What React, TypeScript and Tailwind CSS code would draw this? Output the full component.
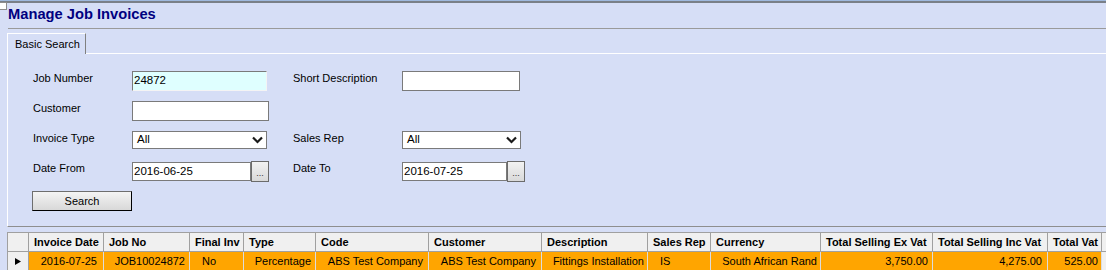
import { ReactNode } from "react";

type Col = {
    w: string;
    head: string;
    value: string;
    cell: string;
};

const cols: Col[] = [
    { w: "w-[75px]", head: "Invoice Date", value: "2016-07-25", cell: "justify-end pr-[6px]" },
    { w: "w-[86px]", head: "Job No", value: "JOB10024872", cell: "justify-end pr-[4px]" },
    { w: "w-[54px]", head: "Final Inv", value: "No", cell: "justify-start pl-[12px]" },
    { w: "w-[72px]", head: "Type", value: "Percentage", cell: "justify-end pr-[4px]" },
    { w: "w-[113px]", head: "Code", value: "ABS Test Company", cell: "justify-end pr-[5px]" },
    { w: "w-[113px]", head: "Customer", value: "ABS Test Company", cell: "justify-end pr-[5px]" },
    { w: "w-[106px]", head: "Description", value: "Fittings Installation", cell: "justify-end pr-[3px]" },
    { w: "w-[63px]", head: "Sales Rep", value: "IS", cell: "justify-start pl-[12px]" },
    { w: "w-[110px]", head: "Currency", value: "South African Rand", cell: "justify-end pr-[3px]" },
    { w: "w-[112px]", head: "Total Selling Ex Vat", value: "3,750.00", cell: "justify-end pr-[4px]" },
    { w: "w-[115px]", head: "Total Selling Inc Vat", value: "4,275.00", cell: "justify-end pr-[5px]" },
    { w: "w-[54px]", head: "Total Vat", value: "525.00", cell: "justify-end pr-[3px]" },
];

function Label({ w, children }: { w: string; children: ReactNode }) {
    return <div className={`${w} shrink-0 text-[11px] leading-[14px] text-black`}>{children}</div>;
}

function TextBox({ w, value = "", focused = false }: { w: string; value?: string; focused?: boolean }) {
    return (
        <div
            className={
                focused
                    ? `${w} h-[20px] shrink-0 border border-[#7a7a7a] border-r-[#f4f4f4] border-b-[#f4f4f4] bg-[#dfffff] pl-[1px] flex items-center text-[11.5px] text-black`
                    : `${w} h-[20px] shrink-0 border border-[#7a7a7a] bg-white pl-[1px] flex items-center text-[11.5px] text-black`
            }
        >
            {value}
        </div>
    );
}

function Select({ w, value }: { w: string; value: string }) {
    return (
        <div className={`${w} h-[18px] shrink-0 border border-[#7a7a7a] bg-white flex items-center justify-between pl-[4px] pr-[3px] text-[11.5px] text-black`}>
            <span>{value}</span>
            <svg width="11" height="8" viewBox="0 0 11 8">
                <polyline points="1,1.5 5.5,6 10,1.5" fill="none" stroke="#1a1a1a" strokeWidth="2.2" />
            </svg>
        </div>
    );
}

function DateBox({ w, value }: { w: string; value: string }) {
    return (
        <div className="flex items-start shrink-0">
            <div className={`${w} h-[19px] mt-[1px] border border-[#7a7a7a] bg-white pl-[1px] flex items-center text-[11.5px] text-black`}>
                {value}
            </div>
            <div className="w-[18px] h-[21px] border border-[#6b6b6b] bg-gradient-to-b from-[#f2f2f2] to-[#d9d9d9] flex items-end justify-center pb-[4px] text-[9px] leading-[8px] text-[#333]">
                ...
            </div>
        </div>
    );
}

export default function App() {
    return (
        <div className="relative w-[1106px] h-[270px] overflow-hidden bg-[#d6def6] font-['Liberation_Sans',Arial,sans-serif]">
            {/* window top edge */}
            <div className="h-[1px] bg-[#9fb9de]" />
            <div className="h-[2px] bg-[#7a8088]" />
            <div className="absolute left-[-1px] top-[2px] w-[8px] h-[8px] border border-[#8c8c8c] bg-white" />

            <h1 className="mt-[3px] pl-[8px] text-[14.7px] leading-[17px] font-bold text-[#000080]">Manage Job Invoices</h1>
            <div className="mt-[5px] ml-[8px] h-[1px] bg-[#9a9a9a]" />

            {/* tabs */}
            <div className="mt-[4px] pl-[7px] flex">
                <div className="w-[79px] h-[21px] border-l border-t border-r border-white border-r-[#808080] pl-[7px] flex items-center text-[11px] text-black">
                    Basic Search
                </div>
                <div className="flex-1 h-[21px] border-b border-white" />
            </div>

            {/* search panel */}
            <div className="ml-[7px] border-l border-b border-l-white border-b-[#8e8e8e] pt-[17px] pb-[15px] pl-[25px] flex flex-col gap-[10px]">
                <div className="flex h-[20px] items-start">
                    <Label w="w-[99px]">Job Number</Label>
                    <TextBox w="w-[135px]" value="24872" focused />
                    <div className="w-[26px] shrink-0" />
                    <Label w="w-[109px]">Short Description</Label>
                    <TextBox w="w-[118px]" />
                </div>
                <div className="flex h-[20px] items-start">
                    <Label w="w-[99px]">Customer</Label>
                    <TextBox w="w-[137px]" />
                </div>
                <div className="flex h-[20px] items-start">
                    <Label w="w-[99px]">Invoice Type</Label>
                    <Select w="w-[135px]" value="All" />
                    <div className="w-[26px] shrink-0" />
                    <Label w="w-[109px]">Sales Rep</Label>
                    <Select w="w-[119px]" value="All" />
                </div>
                <div className="flex h-[20px] items-start">
                    <Label w="w-[99px]">Date From</Label>
                    <DateBox w="w-[119px]" value="2016-06-25" />
                    <div className="w-[24px] shrink-0" />
                    <Label w="w-[109px]">Date To</Label>
                    <DateBox w="w-[105px]" value="2016-07-25" />
                </div>
                <div className="flex h-[20px] items-start">
                    <button className="ml-[-1px] w-[100px] h-[20px] border border-[#6e6e6e] border-r-black border-b-black bg-gradient-to-b from-[#f4f4f4] to-[#d8d8d8] text-[11px] text-black">
                        Search
                    </button>
                </div>
            </div>

            {/* results grid */}
            <div className="mt-[5px] ml-[7px] border-l border-t border-[#a0a0a0]">
                <div className="flex h-[19px] border-b border-[#a0a0a0]">
                    <div className="w-[21px] shrink-0 border-r border-[#a0a0a0] bg-[#f0f0f0]" />
                    {cols.map(c => (
                        <div key={c.head} className={`${c.w} shrink-0 border-r border-[#a0a0a0] bg-[#f0f0f0] pl-[5px] flex items-center whitespace-nowrap overflow-hidden text-[11px] font-bold text-black`}>
                            {c.head}
                        </div>
                    ))}
                    <div className="flex-1 bg-[#f0f0f0]" />
                </div>
                <div className="flex h-[19px]">
                    <div className="w-[21px] shrink-0 border-r border-[#a0a0a0] bg-[#f0f0f0] flex items-center justify-center">
                        <svg width="6" height="7" viewBox="0 0 6 7">
                            <polygon points="0,0 6,3.5 0,7" fill="#000" />
                        </svg>
                    </div>
                    {cols.map(c => (
                        <div key={c.head} className={`${c.w} shrink-0 border-r border-[#dcdcdc] bg-[#ffa500] flex items-center whitespace-nowrap overflow-hidden text-[11px] text-black ${c.cell}`}>
                            {c.value}
                        </div>
                    ))}
                    <div className="flex-1 bg-[#f0f0f0]" />
                </div>
            </div>
        </div>
    );
}
